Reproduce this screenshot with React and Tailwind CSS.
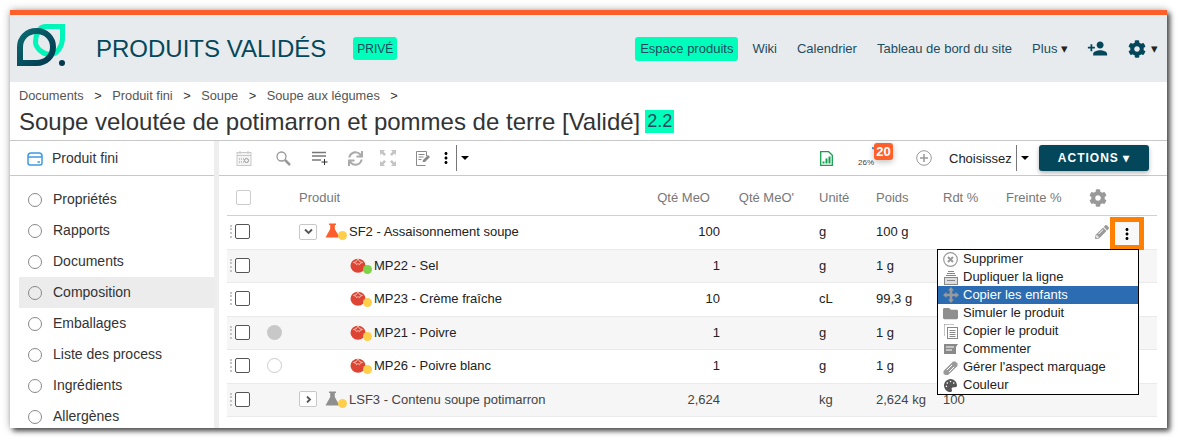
import { FaCog, FaPalette, FaPencilAlt, FaSync, FaFolder } from 'react-icons/fa'
import { MdPersonAdd, MdMoreVert } from 'react-icons/md'

const SIDE_ITEMS = ['Propriétés', 'Rapports', 'Documents', 'Composition', 'Emballages', 'Liste des process', 'Ingrédients', 'Allergènes']

const ROWS = [
  { name: 'SF2 - Assaisonnement soupe', qty: '100', unit: 'g', weight: '100 g', kind: 'flask', flask: '#ff5e2c', dot: '#ffce4a', toggle: 'open' },
  { name: 'MP22 - Sel', qty: '1', unit: 'g', weight: '1 g', kind: 'tomato', dot: '#7ed348', alt: true },
  { name: 'MP23 - Crème fraîche', qty: '10', unit: 'cL', weight: '99,3 g', kind: 'tomato', dot: '#ffce4a' },
  { name: 'MP21 - Poivre', qty: '1', unit: 'g', weight: '1 g', kind: 'tomato', dot: '#ffce4a', alt: true, circle: 'full' },
  { name: 'MP26 - Poivre blanc', qty: '1', unit: 'g', weight: '1 g', kind: 'tomato', dot: '#ffce4a', circle: 'empty' },
  { name: 'LSF3 - Contenu soupe potimarron', qty: '2,624', unit: 'kg', weight: '2,624 kg', rdt: '100', kind: 'flask', flask: '#8f8f8f', dot: '#ffce4a', toggle: 'closed', alt: true, muted: true },
]

const GRID = 'grid grid-cols-[40px_32px_341px_80px_74px_82px_67px_63px_83px_68px] items-center'

function Logo() {
  return (
    <svg width="48" height="42" viewBox="0 0 48 42" className="shrink-0 -mt-[7px]">
      <defs>
        <linearGradient id="lg" x1="0" y1="0" x2="1" y2="1">
          <stop offset="0" stopColor="#0b6a70" />
          <stop offset="1" stopColor="#04384f" />
        </linearGradient>
      </defs>
      <path d="M45.500 2.500H28C22 2.500 18.500 11 18.500 18C18.500 24 26 30.500 33 30.500C40 30.500 45.500 22 45.500 14Z" fill="none" stroke="#00f5b8" strokeWidth="5" />
      <path d="M3 39V23C3 14 10 7 19.500 7C29 7 36 14 36 23C36 32 29 39 19.500 39Z" fill="none" stroke="url(#lg)" strokeWidth="6" />
      <circle cx="45" cy="39" r="3" fill="#04384f" />
    </svg>
  )
}

function Wallet() {
  return (
    <svg width="16" height="14" viewBox="0 0 16 14" fill="none" stroke="#3f9be0" strokeWidth="1.500">
      <path d="M1 11V4C1 2.500 2 1 4 1h8c2 0 3 1.500 3 3v7c0 1-1 2-2 2H3c-1 0-2-1-2-2z" />
      <path d="M1 5h14" />
      <path d="M10.500 10h2.500" />
    </svg>
  )
}

function Calendar() {
  return (
    <svg width="16" height="16" viewBox="0 0 16 16" fill="none" stroke="#c9c9c9">
      <rect x="1" y="2.500" width="14" height="13" fill="#f3f3f3" />
      <path d="M1 5.500h14M4 1v3M12 1v3" />
      <path d="M3 9h5M3 12h5" strokeDasharray="1 1" stroke="#999" />
      <circle cx="10.500" cy="10.500" r="2" stroke="#999" />
    </svg>
  )
}

function Search() {
  return (
    <svg width="15" height="15" viewBox="0 0 15 15" fill="none" stroke="#999">
      <circle cx="5.500" cy="5.500" r="4.500" strokeWidth="1.300" />
      <path d="M9 9l5 5" strokeWidth="2.500" />
    </svg>
  )
}

function AddRow() {
  return (
    <svg width="16" height="16" viewBox="0 0 16 16" stroke="#777">
      <path d="M0 2.500h14" strokeWidth="1.500" />
      <path d="M0 6h14" strokeWidth="1.500" />
      <path d="M0 10h9" strokeWidth="1.500" />
      <path d="M12.500 9v6M9.500 12h6" stroke="#333" />
    </svg>
  )
}

function Expand() {
  return (
    <svg width="16" height="16" viewBox="0 0 16 16" fill="#c4c4c4">
      <path d="M0 0h5L3.500 1.700 6 4.200 4.200 6 1.700 3.500 0 5zM16 0v5l-1.700-1.500L11.800 6 10 4.200l2.500-2.500L11 0zM0 16v-5l1.700 1.500L4.200 10 6 11.800l-2.500 2.500L5 16zM16 16h-5l1.500-1.700L10 11.800 11.800 10l2.500 2.500 1.700-1.500z" />
    </svg>
  )
}

function Notes() {
  return (
    <svg width="15" height="15" viewBox="0 0 15 15" fill="none" stroke="#8a8a8a">
      <path d="M10.500 5V.5H.5v14h9" />
      <path d="M2.500 3.500h6M2.500 6h5M2.500 8.500h3" />
      <path d="M6.500 11l.5-2 5-5 2 2-5 5z" fill="#8a8a8a" stroke="none" />
    </svg>
  )
}

function Caret({ className = 'border-t-black' }) {
  return <span className={`inline-block w-0 h-0 border-x-[4px] border-x-transparent border-t-[4px] ${className}`} />
}

function Sheet() {
  return (
    <svg width="13" height="15" viewBox="0 0 13 15" fill="none" stroke="#14a04f" strokeWidth="1.300">
      <path d="M.7.700h8l3.600 3.600v10H.7z" />
      <path d="M3.500 12.500v-2M6.500 12.500v-5M9.500 12.500v-7" strokeWidth="2" />
    </svg>
  )
}

function Gauge() {
  return (
    <div className="relative w-[28px] h-[24px]">
      <svg width="28" height="14" viewBox="0 0 28 14" className="absolute top-0 left-0" fill="none" stroke="#3f9be0" strokeWidth="2">
        <path d="M14 2C18 2 21 5 23 11" />
      </svg>
      <span className="absolute left-0 top-[12px] text-[8px] leading-[10px] text-[#444]">26%</span>
    </div>
  )
}

function Flask({ color }) {
  return (
    <svg width="15" height="15" viewBox="0 0 15 15">
      <path d="M4 .500h7v1.500H9.800v4l4.700 8.500H.5L5.200 6V2H4z" fill={color} />
    </svg>
  )
}

function Tomato() {
  return (
    <svg width="16" height="16" viewBox="0 0 16 16">
      <ellipse cx="8" cy="8.800" rx="7.500" ry="7" fill="#de4433" />
      <path d="M3.500 5.500l3-1 1.500-3 1.500 3 3 1-2.500.8-.5 1.500-1.500-1.300-1.500 1.300-.5-1.500z" fill="none" stroke="#f6d3c9" strokeWidth=".8" />
    </svg>
  )
}

function StatusIcon({ row }) {
  return (
    <span className="relative inline-block w-[24px] h-[17px] shrink-0">
      {row.kind === 'flask' ? <Flask color={row.flask} /> : <Tomato />}
      <span className="absolute right-[2px] bottom-0 w-[9px] h-[9px] rounded-full" style={{ backgroundColor: row.dot }} />
    </span>
  )
}

function Toggle({ open }) {
  return (
    <span className="w-[18px] h-[16px] border border-[#c8c8c8] rounded-[2px] flex items-center justify-center bg-white">
      <svg width="9" height="7" viewBox="0 0 9 7" fill="none" stroke="#555" strokeWidth="1.800">
        {open ? <path d="M1 1.500l3.500 3.500 3.500-3.500" /> : <path d="M3 .500l3 3-3 3" />}
      </svg>
    </span>
  )
}

function Row({ row, first }) {
  return (
    <div className={`${GRID} h-[33.500px] pb-[1px] border-b border-[#eaeaea] text-[13px] text-[#222] ${row.alt ? 'bg-[#f6f6f6]' : 'bg-white'} ${row.muted ? 'text-[#444]' : ''}`}>
      <div className="flex items-center gap-[1px] pl-[3px]">
        <span className="w-[3px] h-[13px] border-l-[2px] border-dotted border-[#c4c4c4]" />
        <span className="w-[15px] h-[15px] border border-[#555] rounded-[2px] bg-white ml-[1px]" />
      </div>
      <div>
        {row.circle === 'full' && <span className="block w-[15px] h-[15px] rounded-full bg-[#c8c8c8]" />}
        {row.circle === 'empty' && <span className="block w-[15px] h-[15px] rounded-full border border-[#ccc] bg-white" />}
      </div>
      <div className={`flex items-center whitespace-nowrap ${row.toggle ? '' : 'pl-[51px]'}`}>
        {row.toggle && <span className="mr-[8px]"><Toggle open={row.toggle === 'open'} /></span>}
        <StatusIcon row={row} />
        <span>{row.name}</span>
      </div>
      <div className="text-right">{row.qty}</div>
      <div />
      <div className="pl-[25px]">{row.unit}</div>
      <div>{row.weight}</div>
      <div>{row.rdt}</div>
      <div />
      <div className="relative h-full flex items-center">
        {first && (
          <>
            <FaPencilAlt className="ml-[6px] text-[#9a9a9a] text-[14px]" />
            <div className="absolute left-[21px] top-[1px] w-[34px] h-[33px] border-[5px] border-[#ff7f00] bg-[#f8f8f8] flex items-center justify-center">
              <MdMoreVert className="text-[18px] text-black" />
            </div>
          </>
        )}
      </div>
    </div>
  )
}

const MENU = [
  { label: 'Supprimer', icon: <svg width="15" height="15" viewBox="0 0 15 15" fill="none" stroke="#999"><circle cx="7.500" cy="7.500" r="6.800" strokeWidth="1.200" /><path d="M5 5l5 5M10 5l-5 5" strokeWidth="2" /></svg> },
  { label: 'Dupliquer la ligne', icon: <svg width="14" height="15" viewBox="0 0 14 15" fill="none" stroke="#888"><path d="M4 1.500h6M3 3.500h8M2 5.500h10" /><rect x=".5" y="7.500" width="13" height="7" fill="#ddd" /><path d="M3 10.500h8" /></svg> },
  { label: 'Copier les enfants', active: true, icon: <svg width="16" height="16" viewBox="0 0 16 16" fill="#9a9a9a"><path d="M8 0l3 3.500H9.300v3.200h3.200V5L16 8l-3.500 3V9.300H9.300v3.200H11L8 16l-3-3.500h1.700V9.300H3.500V11L0 8l3.500-3v1.700h3.200V3.500H5z" /></svg> },
  { label: 'Simuler le produit', icon: <FaFolder className="text-[15px] text-[#8f8f8f]" /> },
  { label: 'Copier le produit', icon: <svg width="14" height="15" viewBox="0 0 14 15" fill="none" stroke="#888"><path d="M.5.500v11M.5.500h9" strokeDasharray="1 1" /><rect x="3.500" y="3.500" width="10" height="11" /><path d="M5.500 6.500h6M5.500 8.500h6M5.500 10.500h6M5.500 12.500h6" /></svg> },
  { label: 'Commenter', icon: <svg width="14" height="12" viewBox="0 0 14 12" fill="#8a8a8a"><path d="M0 1h14l-2 3v7H0z" /><path d="M2 4h8M2 7h6" stroke="#fff" /></svg> },
  { label: "Gérer l'aspect marquage", icon: <svg width="15" height="15" viewBox="0 0 15 15" fill="#9a9a9a"><path d="M.5 11L10 1.500h2.500L14.500 3.500V6L5 15H2L.5 13.500z" /><path d="M4 10l5-5M6 12l5-5" stroke="#fff" /></svg> },
  { label: 'Couleur', icon: <FaPalette className="text-[13px] text-[#555]" /> },
]

function RowMenu() {
  return (
    <div className="absolute left-[718px] top-[73px] w-[202px] border border-black bg-white z-10 text-[13px] text-[#222]">
      {MENU.map(item => (
        <div key={item.label} className={`flex items-center h-[18px] ${item.active ? 'bg-[#2b6cb3] text-white' : ''}`}>
          <span className="w-[25px] flex justify-center shrink-0">{item.icon}</span>
          <span className="whitespace-nowrap">{item.label}</span>
        </div>
      ))}
    </div>
  )
}

export default function App() {
  return (
    <div className="w-[1183px] h-[444px] bg-white pl-[10px] pt-[10px] font-['Liberation_Sans',Arial,sans-serif] overflow-hidden">
      <div className="w-[1157px] h-[418px] flex flex-col overflow-hidden bg-white shadow-[3px_3px_5px_rgba(0,0,0,0.65),0_0_8px_rgba(0,0,0,0.3)]">
        <div className="h-[5px] shrink-0 bg-[#ff5f2b]" />

        {/* Top header */}
        <div className="h-[67px] shrink-0 bg-[#e7ebee] flex items-center pl-[7px] pr-[9px] text-[#1e4b5e]">
          <Logo />
          <h1 className="ml-[31px] text-[24px] text-[#04475a] whitespace-nowrap">PRODUITS VALIDÉS</h1>
          <span className="ml-[27px] h-[23px] px-[4px] rounded-[3px] bg-[#00ffbb] text-[12px] flex items-center">PRIVÉ</span>
          <nav className="ml-auto flex items-center text-[13px] whitespace-nowrap">
            <span className="h-[24px] px-[5px] rounded-[3px] bg-[#00ffbb] flex items-center">Espace produits</span>
            <span className="ml-[14px]">Wiki</span>
            <span className="ml-[20px]">Calendrier</span>
            <span className="ml-[20px]">Tableau de bord du site</span>
            <span className="ml-[20px]">Plus <span className="text-[#222]">▾</span></span>
            <MdPersonAdd className="ml-[19px] text-[21px] text-[#04475a]" />
            <FaCog className="ml-[20px] text-[18px] text-[#04475a]" />
            <span className="ml-[5px] text-[#222]">▾</span>
          </nav>
        </div>

        {/* Breadcrumb and title */}
        <div className="h-[59px] shrink-0 border-b border-[#c8c8c8] pl-[9px] pt-[6px]">
          <div className="flex gap-[10.500px] text-[12.800px] leading-[16px] text-[#555]">
            <span>Documents</span><span className="text-[#333]">&gt;</span>
            <span>Produit fini</span><span className="text-[#333]">&gt;</span>
            <span>Soupe</span><span className="text-[#333]">&gt;</span>
            <span>Soupe aux légumes</span><span className="text-[#333]">&gt;</span>
          </div>
          <div className="flex items-center mt-[4px] text-[24px] leading-[27px] text-[#333] whitespace-nowrap">
            Soupe veloutée de potimarron et pommes de terre [Validé]
            <span className="ml-[5px] px-[2px] h-[23px] flex items-center bg-[#00ffbb] text-[18px] text-[#1e4b5e]">2.2</span>
          </div>
        </div>

        <div className="flex-1 flex min-h-0">
          {/* Sidebar */}
          <aside className="w-[204px] shrink-0 overflow-hidden">
            <div className="h-[35px] border-b border-[#c8c8c8] flex items-center pl-[17px] pt-[1px] gap-[9px] text-[14px] text-[#333]">
              <Wallet />
              <span>Produit fini</span>
            </div>
            <ul className="pl-[9px] pt-[8px] text-[14px] text-[#333]">
              {SIDE_ITEMS.map(item => (
                <li key={item} className={`h-[31px] flex items-center pl-[9px] gap-[11px] ${item === 'Composition' ? 'bg-[#ececec]' : ''}`}>
                  <span className="w-[14px] h-[14px] rounded-full border border-[#888] shrink-0" />
                  {item}
                </li>
              ))}
            </ul>
          </aside>

          <div className="w-[5px] shrink-0 bg-[#eeeeee]" />

          {/* Main */}
          <main className="flex-1 min-w-0 flex flex-col">
            <div className="h-[35px] shrink-0 border-b border-[#c8c8c8] flex items-center pl-[17px] pr-[18px]">
              <Calendar />
              <span className="ml-[24px] flex"><Search /></span>
              <span className="ml-[21px] flex"><AddRow /></span>
              <FaSync className="ml-[20px] text-[15px] text-[#aaa]" />
              <span className="ml-[17px] flex"><Expand /></span>
              <span className="ml-[20px] flex"><Notes /></span>
              <span className="ml-[8px] flex w-[14px] justify-center"><MdMoreVert className="text-[18px] text-black shrink-0" /></span>
              <span className="ml-[3px] w-px h-[26px] bg-[#777]" />
              <span className="ml-[4px] flex"><Caret /></span>

              <span className="ml-[351px] flex"><Sheet /></span>
              <span className="relative ml-[25px] flex">
                <Gauge />
                <span className="absolute left-[16px] -top-[3px] w-[19px] h-[17px] rounded-[3px] bg-[#ff5f2b] text-white text-[13px] font-bold leading-[17px] text-center shadow-[0_2px_6px_rgba(0,0,0,0.25)]">20</span>
              </span>
              <svg width="16" height="16" viewBox="0 0 16 16" fill="none" stroke="#999" className="ml-[30px]">
                <circle cx="8" cy="8" r="7.300" />
                <path d="M8 4v8M4 8h8" strokeWidth="1.500" />
              </svg>
              <span className="ml-[17px] pt-[1px] text-[13px] text-[#222] whitespace-nowrap">Choisissez</span>
              <span className="ml-[4px] w-px h-[26px] bg-[#777]" />
              <span className="ml-[4px] flex"><Caret /></span>
              <button className="ml-auto w-[110px] h-[26px] rounded-[3px] bg-[#04475a] text-white text-[12px] font-bold tracking-[1px] shadow-[0_2px_4px_rgba(0,0,0,0.3)] whitespace-nowrap">ACTIONS ▾</button>
            </div>

            <div className="relative flex-1 pl-[8px] pr-[10px] overflow-hidden">
              <div className={`${GRID} h-[40px] pt-[4px] border-b border-[#d0d0d0] text-[13px] text-[#777]`}>
                <div className="pl-[9px]"><span className="block w-[15px] h-[15px] border border-[#ccc] rounded-[2px]" /></div>
                <div />
                <div>Produit</div>
                <div className="text-right pr-[10px]">Qté MeO</div>
                <div className="text-right">Qté MeO'</div>
                <div className="pl-[25px]">Unité</div>
                <div>Poids</div>
                <div>Rdt %</div>
                <div>Freinte %</div>
                <div><FaCog className="text-[18px] text-[#999]" /></div>
              </div>
              {ROWS.map((row, i) => <Row key={row.name} row={row} first={i === 0} />)}
              <RowMenu />
            </div>
          </main>
        </div>
      </div>
    </div>
  )
}
